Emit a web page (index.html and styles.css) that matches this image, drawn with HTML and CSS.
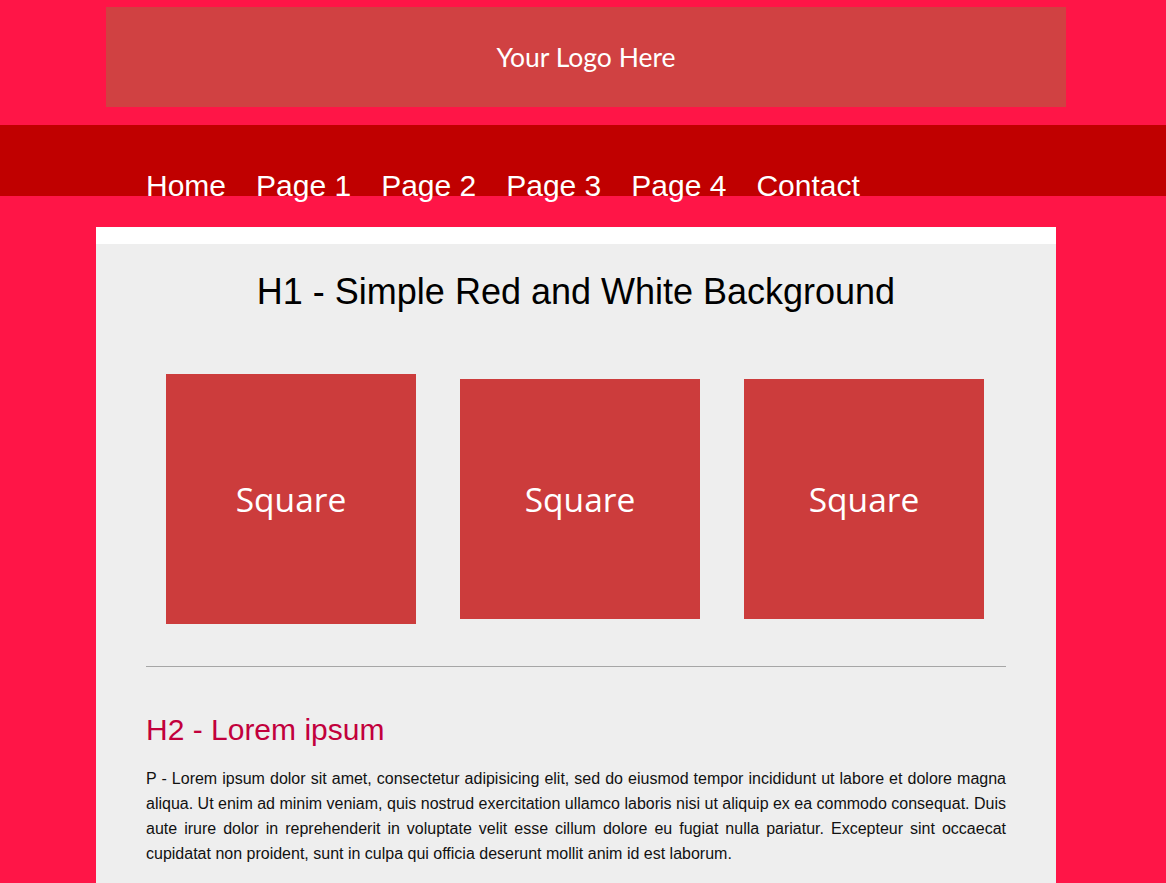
FILE: index.html
```html
<!DOCTYPE html>
<html>
<head>
<meta charset="utf-8">
<title>Simple Red and White Background</title>
<link rel="stylesheet" href="styles.css">
</head>
<body>
<header class="site-header">
  <div class="logo">Your Logo Here</div>
</header>
<nav class="main-nav">
  <ul class="menu">
    <li><a href="#">Home</a></li>
    <li><a href="#">Page 1</a></li>
    <li><a href="#">Page 2</a></li>
    <li><a href="#">Page 3</a></li>
    <li><a href="#">Page 4</a></li>
    <li><a href="#">Contact</a></li>
  </ul>
</nav>
<main class="content">
  <h1 class="title">H1 - Simple Red and White Background</h1>
  <div class="squares">
    <div class="square square-big">Square</div>
    <div class="square">Square</div>
    <div class="square">Square</div>
  </div>
  <hr class="divider">
  <h2 class="subtitle">H2 - Lorem ipsum</h2>
  <p class="text">P - Lorem ipsum dolor sit amet, consectetur adipisicing elit, sed do eiusmod tempor incididunt ut labore et dolore magna aliqua. Ut enim ad minim veniam, quis nostrud exercitation ullamco laboris nisi ut aliquip ex ea commodo consequat. Duis aute irure dolor in reprehenderit in voluptate velit esse cillum dolore eu fugiat nulla pariatur. Excepteur sint occaecat cupidatat non proident, sunt in culpa qui officia deserunt mollit anim id est laborum.</p>
</main>
</body>
</html>
```
FILE: styles.css
```css
html, body {
  margin: 0;
  padding: 0;
}
body {
  background: #ff1547;
  font-family: "Liberation Sans", Arial, sans-serif;
  color: #111;
}
.site-header {
  padding-top: 7px;
  height: 125px;
  box-sizing: border-box;
}
.logo {
  margin-left: 106px;
  width: 960px;
  height: 100px;
  background: #d04142;
  color: #fff;
  font-family: Lato, "Open Sans", sans-serif;
  font-size: 26.5px;
  display: flex;
  align-items: center;
  justify-content: center;
}
.main-nav {
  background: #c00000;
  height: 71px;
}
.menu {
  list-style: none;
  margin: 0;
  padding: 44px 0 0 146px;
  display: flex;
  gap: 30px;
  height: 27px;
}
.menu a {
  color: #fff;
  text-decoration: none;
  font-size: 30px;
}
.content {
  margin: 31px 0 0 96px;
  width: 960px;
  background: #eeeeee;
  border-top: 17px solid #fff;
  padding: 0 50px 30px;
  box-sizing: border-box;
}
.title {
  margin: 0;
  padding-top: 27px;
  font-size: 36px;
  font-weight: normal;
  text-align: center;
  color: #000;
}
.squares {
  display: flex;
  align-items: center;
  gap: 44px;
  margin: 61px 0 0 20px;
}
.square {
  width: 240px;
  height: 240px;
  background: #cc3c3c;
  color: #fff;
  font-family: "Open Sans", Lato, sans-serif;
  font-size: 33.5px;
  display: flex;
  align-items: center;
  justify-content: center;
}
.square-big {
  width: 250px;
  height: 250px;
}
.divider {
  margin: 42px 0 0;
  border: 0;
  border-top: 1px solid #a6a6a6;
  height: 0;
}
.subtitle {
  margin: 46px 0 0;
  font-size: 30px;
  font-weight: normal;
  color: #c2003c;
}
.text {
  margin: 19px 0 0;
  font-size: 16px;
  line-height: 25px;
  text-align: justify;
  color: #111;
}
```
